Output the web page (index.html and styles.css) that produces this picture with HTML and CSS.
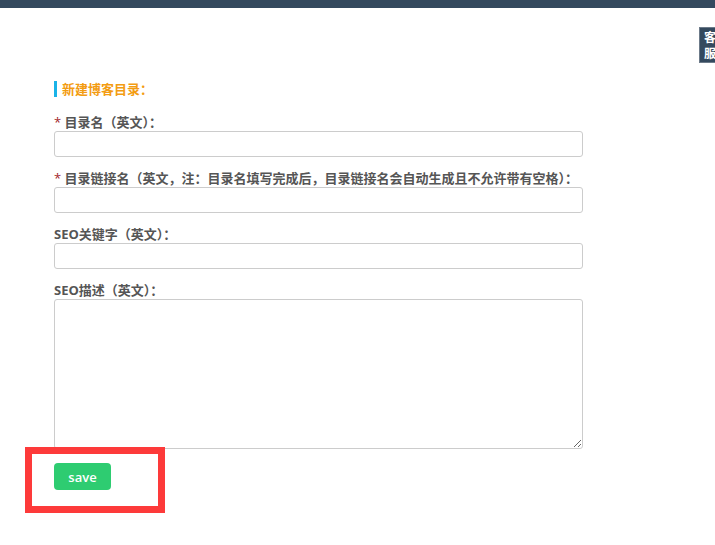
FILE: index.html
```html
<!DOCTYPE html>
<html lang="zh-CN">
<head>
<meta charset="utf-8">
<title>新建博客目录</title>
<link rel="stylesheet" href="styles.css">
</head>
<body>
<div class="topbar"></div>
<div class="service">客<br>服</div>
<main class="page">
  <h3 class="title">新建博客目录：</h3>
  <form class="form">
    <div class="field">
      <label class="label"><span class="req">*</span> 目录名（英文）：</label>
      <input class="input" type="text">
    </div>
    <div class="field">
      <label class="label"><span class="req">*</span> 目录链接名（英文，注：目录名填写完成后，目录链接名会自动生成且不允许带有空格）：</label>
      <input class="input" type="text">
    </div>
    <div class="field">
      <label class="label">SEO关键字（英文）：</label>
      <input class="input" type="text">
    </div>
    <div class="field">
      <label class="label">SEO描述（英文）：</label>
      <textarea class="textarea"></textarea>
    </div>
    <div class="actions">
      <button class="save" type="button">save</button>
      <div class="highlight"></div>
    </div>
  </form>
</main>
</body>
</html>
```
FILE: styles.css
```css
* { box-sizing: border-box; }
html, body { margin: 0; padding: 0; background: #fff; }
body {
  font-family: "Open Sans", "Noto Sans CJK SC", sans-serif;
  font-size: 13px;
  color: #555;
  width: 715px;
  height: 545px;
  overflow: hidden;
  position: relative;
}
.topbar { height: 8px; background: #34495e; }
.service {
  position: absolute;
  left: 699px;
  top: 27px;
  width: 16px;
  height: 36px;
  background: #34495e;
  border: 1px solid #6c7a89;
  border-right: none;
  color: #fff;
  font-size: 12px;
  line-height: 16px;
  padding: 2px 0 0 4px;
  font-weight: bold;
  overflow: hidden;
  white-space: nowrap;
}
.page { padding: 0 0 0 54px; }
.title {
  margin: 73px 0 0 0;
  height: 16px;
  line-height: 16px;
  font-size: 13px;
  font-weight: bold;
  color: #f39c12;
  border-left: 3px solid #1ab3e8;
  padding-left: 5px;
}
.form { width: 529px; margin-top: 18px; }
.field { margin-bottom: 14px; }
.label {
  display: block;
  line-height: 14px;
  height: 16px;
  font-weight: bold;
  color: #555;
  white-space: nowrap;
}
.req { color: #a3262b; font-weight: normal; }
.input {
  display: block;
  width: 529px;
  height: 26px;
  border: 1px solid #ccc;
  border-radius: 3px;
  margin: 0;
  padding: 0 6px;
  background: #fff;
  font: inherit;
}
.textarea {
  display: block;
  width: 529px;
  height: 150px;
  border: 1px solid #ccc;
  border-radius: 3px;
  margin: 0;
  padding: 4px 6px;
  font: inherit;
  resize: both;
}
.actions { position: relative; margin-top: 1px; }
.save {
  display: block;
  width: 57px;
  height: 27px;
  border: none;
  border-radius: 4px;
  background: #2ecc71;
  color: #fff;
  font-family: "Open Sans", sans-serif;
  font-size: 13px;
  font-weight: 600;
  padding: 0;
}
.highlight {
  position: absolute;
  left: -29px;
  top: -16px;
  width: 140px;
  height: 66px;
  border: 7px solid #fd3a3a;
}
```
